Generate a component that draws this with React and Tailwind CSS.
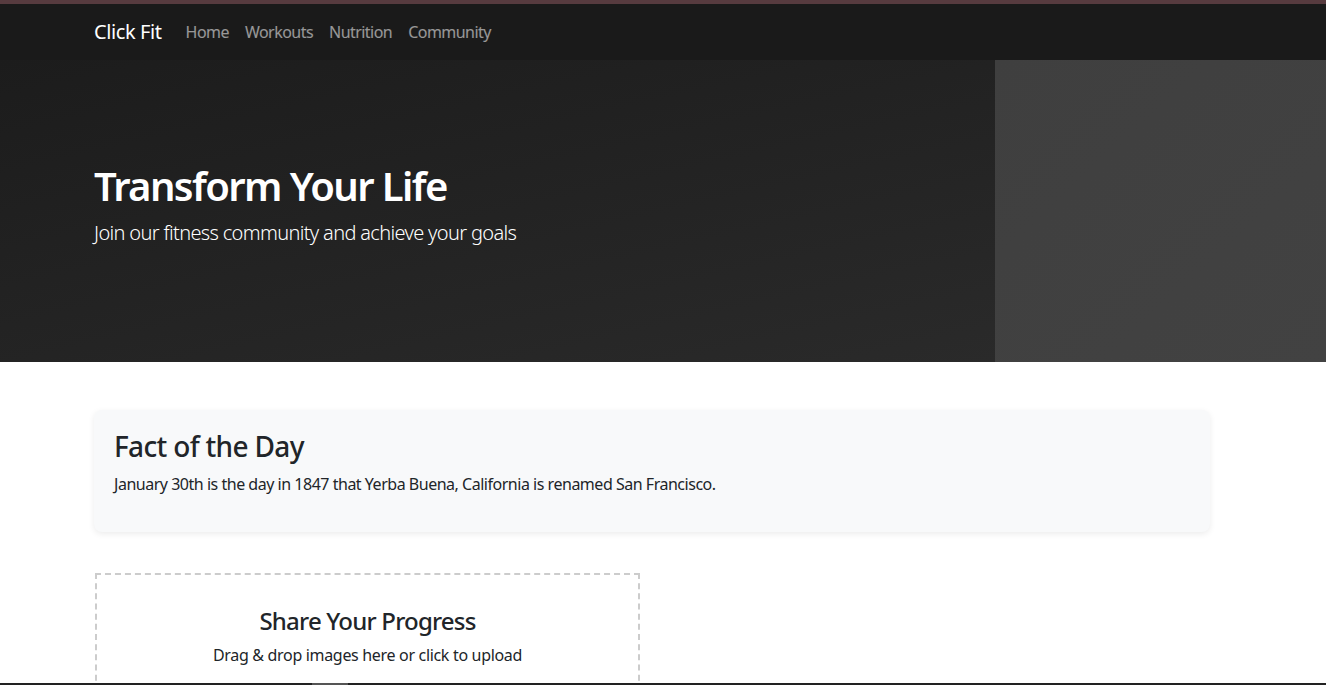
import React from 'react';

const font = { fontFamily: '"Noto Sans", "Open Sans", sans-serif' };

export default function App() {
  return (
    <div className="flex h-[685px] flex-col overflow-hidden bg-white text-[#212529]" style={font}>
      {/* top accent strip */}
      <div className="h-[4px] bg-[#573b3f]" />

      {/* Navbar */}
      <nav className="flex h-[56px] items-center bg-[#1a1a1a] pl-[94px]">
        <span className="mr-4 text-[20px] leading-[30px] tracking-[-0.02em] text-white">Click Fit</span>
        <div className="flex items-center">
          {['Home', 'Workouts', 'Nutrition', 'Community'].map((l) => (
            <a key={l} className="px-2 text-[16px] leading-6 tracking-[-0.034em] text-white/55">{l}</a>
          ))}
        </div>
      </nav>

      {/* Hero */}
      <section className="flex h-[302px] bg-gradient-to-br from-[#1c1c1c] to-[#2c2c2c]">
        <div className="flex-1 pl-[94px] pt-[102px] text-white">
          <h1 className="mb-2 text-[40px] font-semibold leading-[48px] tracking-[-0.04em]">Transform Your Life</h1>
          <p className="text-[20px] font-light leading-[30px] tracking-[-0.033em]">Join our fitness community and achieve your goals</p>
        </div>
        <div className="w-[331px] bg-gradient-to-br from-[#3f3f3f] to-[#424242]" />
      </section>

      {/* Main content */}
      <main className="flex-1 overflow-hidden pl-[94px] pt-[48px]">
        <div className="w-[1116px] rounded-lg bg-[#f8f9fa] p-5 shadow-[0_2px_6px_rgba(0,0,0,0.08)]">
          <h3 className="mb-2 text-[28px] font-medium leading-[33.6px] tracking-[-0.024em]">Fact of the Day</h3>
          <p className="mb-4 text-[16px] leading-6 tracking-[-0.03em]">January 30th is the day in 1847 that Yerba Buena, California is renamed San Francisco.</p>
        </div>

        <div className="mt-[41px] ml-px w-[545px] border-2 border-dashed border-[#cccccc] px-8 pt-8 pb-8 text-center">
          <h4 className="mb-2 text-[24px] font-medium leading-[28.8px] tracking-[-0.033em]">Share Your Progress</h4>
          <p className="text-[16px] leading-6 tracking-[-0.02em]">Drag &amp; drop images here or click to upload</p>
        </div>
      </main>

      {/* bottom strip */}
      <div className="flex h-[2px] bg-[#222222]">
        <div className="ml-[312px] w-[36px] bg-[#555555]" />
      </div>
    </div>
  );
}
